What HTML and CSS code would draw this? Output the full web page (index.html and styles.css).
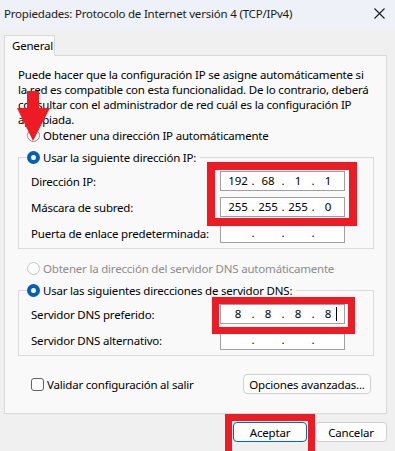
FILE: index.html
```html
<!DOCTYPE html>
<html>
<head>
  <title>Propiedades: Protocolo de Internet versión 4 (TCP/IPv4)</title>
  <link rel="stylesheet" href="styles.css">
</head>
<body>
  <div class="window">
    <div class="titlebar">
      <span class="title">Propiedades: Protocolo de Internet versión 4 (TCP/IPv4)</span>
      <svg class="close" width="11" height="11" viewBox="0 0 11 11">
        <path d="M0.5 0.5 L10.5 10.5 M10.5 0.5 L0.5 10.5" stroke="#1a1a1a" stroke-width="1.1" fill="none"/>
      </svg>
    </div>

    <div class="client">
      <div class="tabs">
        <div class="tab">General</div>
      </div>

      <div class="pane">
        <p class="intro">Puede hacer que la configuración IP se asigne automáticamente si la red es compatible con esta funcionalidad. De lo contrario, deberá consultar con el administrador de red cuál es la configuración IP apropiada.</p>

        <div class="option">
          <span class="radio"></span>Obtener una dirección IP automáticamente
        </div>

        <fieldset class="group">
          <legend class="option"><span class="radio on"></span>Usar la siguiente dirección IP:</legend>
          <div class="row">
            <span class="label">Dirección IP:</span>
            <div class="ip"><span class="seg">192</span><span class="dot">.</span><span class="seg">68</span><span class="dot">.</span><span class="seg">1</span><span class="dot">.</span><span class="seg">1</span></div>
          </div>
          <div class="row">
            <span class="label">Máscara de subred:</span>
            <div class="ip"><span class="seg">255</span><span class="dot">.</span><span class="seg">255</span><span class="dot">.</span><span class="seg">255</span><span class="dot">.</span><span class="seg">0</span></div>
          </div>
          <div class="row last">
            <span class="label">Puerta de enlace predeterminada:</span>
            <div class="ip"><span class="seg"></span><span class="dot">.</span><span class="seg"></span><span class="dot">.</span><span class="seg"></span><span class="dot">.</span><span class="seg"></span></div>
          </div>
        </fieldset>

        <div class="option disabled">
          <span class="radio"></span>Obtener la dirección del servidor DNS automáticamente
        </div>

        <fieldset class="group dns">
          <legend class="option"><span class="radio on"></span>Usar las siguientes direcciones de servidor DNS:</legend>
          <div class="row">
            <span class="label">Servidor DNS preferido:</span>
            <div class="ip"><span class="seg">8</span><span class="dot">.</span><span class="seg">8</span><span class="dot">.</span><span class="seg">8</span><span class="dot">.</span><span class="seg caret">8</span></div>
          </div>
          <div class="row">
            <span class="label">Servidor DNS alternativo:</span>
            <div class="ip"><span class="seg"></span><span class="dot">.</span><span class="seg"></span><span class="dot">.</span><span class="seg"></span><span class="dot">.</span><span class="seg"></span></div>
          </div>
        </fieldset>

        <div class="bottom-row">
          <div class="check"><span class="box"></span>Validar configuración al salir</div>
          <button class="btn wide">Opciones avanzadas...</button>
        </div>
      </div>

      <div class="buttons">
        <button class="btn default">Aceptar</button>
        <button class="btn">Cancelar</button>
      </div>
    </div>

    <!-- anotaciones en rojo -->
    <svg class="arrow" width="36" height="52" viewBox="0 0 36 52">
      <path d="M11 0 H23 V17 H34 L17 50 L1 17 H11 Z" fill="#ed1c24"/>
    </svg>
    <div class="mark mark-ip"></div>
    <div class="mark mark-dns"></div>
    <div class="mark mark-ok"></div>
  </div>
</body>
</html>
```

FILE: styles.css
```css
* {
  box-sizing: border-box;
}

body {
  margin: 0;
  font-family: "Noto Sans", "Open Sans", sans-serif;
  font-size: 11.5px;
  letter-spacing: -0.2px;
  color: #000;
  background: #f0f0f0;
}

.window {
  position: relative;
  width: 395px;
  height: 451px;
  overflow: hidden;
  background: #f0f0f0;
}

.titlebar {
  height: 30px;
  display: flex;
  align-items: center;
  justify-content: space-between;
  padding: 0 10px 3px 4px;
  background: #eef1f7;
}

.title {
  color: #1a1a1a;
}

.client {
  padding: 5px 8px 0 4px;
}

.tabs {
  display: flex;
}

.tab {
  position: relative;
  z-index: 1;
  width: 51px;
  height: 21px;
  margin-bottom: -1px;
  padding-left: 7px;
  line-height: 19px;
  background: #f9f9f9;
  border: 1px solid #d9d9d9;
  border-bottom: none;
}

.pane {
  background: #f9f9f9;
  border: 1px solid #d9d9d9;
  padding: 11px 15px 14px 13px;
  height: 359px;
}

.intro {
  margin: 0;
  line-height: 15px;
}

.option {
  display: flex;
  align-items: center;
  height: 15px;
  margin: 1px 0 0 9px;
}

.option.disabled {
  color: #8c8c8c;
  margin-top: 12px;
}

.radio {
  width: 13px;
  height: 13px;
  border-radius: 50%;
  border: 1px solid #8a8a8a;
  background: #fff;
  margin-right: 3px;
  flex: none;
}

.radio.on {
  border: 4px solid #005fb8;
  background: #fff;
}

.disabled .radio {
  border-color: #c6c6c6;
}

.group {
  margin: 7px 0 0 0;
  padding: 6px 0 5px 12px;
  width: 356px;
  border: 1px solid #dcdcdc;
  border-radius: 0;
}

.group legend {
  margin: 0 0 0 -4px;
  padding: 0 4px 0 0;
}

.row {
  display: grid;
  grid-template-columns: 189px 125px;
  align-items: center;
  height: 20px;
  margin-bottom: 6px;
}

.row:last-child {
  margin-bottom: 0;
}

.row.last {
  margin-top: 2px;
}

.ip {
  display: flex;
  height: 20px;
  padding-left: 5px;
  background: #fff;
  border: 1px solid #a0a0a0;
  line-height: 18px;
  letter-spacing: 0;
}

.seg {
  width: 24px;
  text-align: center;
}

.dot {
  width: 6px;
  text-align: center;
}

.caret {
  position: relative;
}

.caret::after {
  content: "";
  position: absolute;
  right: 3px;
  top: 2px;
  width: 1px;
  height: 14px;
  background: #000;
}

.group.dns {
  margin-top: 7px;
}

.bottom-row {
  display: flex;
  align-items: center;
  justify-content: space-between;
  margin-top: 18px;
  padding-left: 13px;
}

.check {
  display: flex;
  align-items: center;
}

.box {
  width: 13px;
  height: 13px;
  margin-right: 3px;
  border: 1px solid #616161;
  border-radius: 3px;
  background: #fff;
}

.btn {
  height: 20px;
  padding: 0;
  font-family: inherit;
  font-size: 11.5px;
  letter-spacing: -0.2px;
  color: #000;
  background: #fdfdfd;
  border: 1px solid #d0d0d0;
  border-radius: 4px;
}

.btn.wide {
  width: 128px;
}

.buttons {
  display: flex;
  justify-content: flex-end;
  gap: 8px;
  margin-top: 8px;
}

.buttons .btn {
  width: 72px;
}

.buttons .btn.default {
  width: 74px;
  border-color: #0067c0;
}

.arrow {
  position: absolute;
  left: 16px;
  top: 91px;
}

.mark {
  position: absolute;
  border: 8px solid #ed1c24;
}

.mark-ip {
  left: 207px;
  top: 162px;
  width: 150px;
  height: 64px;
}

.mark-dns {
  left: 212px;
  top: 297px;
  width: 143px;
  height: 37px;
  border-width: 7px;
}

.mark-ok {
  left: 225px;
  top: 414px;
  width: 90px;
  height: 45px;
  border-width: 7px;
}
```
